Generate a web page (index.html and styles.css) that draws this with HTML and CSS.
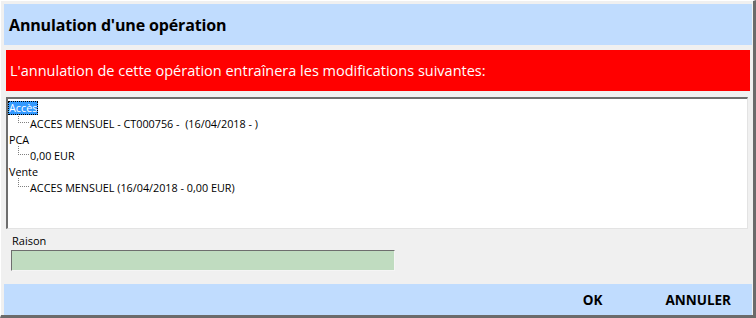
FILE: index.html
```html
<!DOCTYPE html>
<html lang="fr">
<head>
<meta charset="utf-8">
<title>Annulation d'une opération</title>
<link rel="stylesheet" href="styles.css">
</head>
<body>
<div class="window">
  <div class="header">Annulation d'une opération</div>
  <div class="warning">L'annulation de cette opération entraînera les modifications suivantes:</div>
  <div class="tree">
    <div class="node"><span class="label selected">Accès</span></div>
    <div class="leaf"><span class="branch"></span><span class="label">ACCES MENSUEL - CT000756 -&nbsp; (16/04/2018 - )</span></div>
    <div class="node"><span class="label">PCA</span></div>
    <div class="leaf"><span class="branch"></span><span class="label">0,00 EUR</span></div>
    <div class="node"><span class="label">Vente</span></div>
    <div class="leaf"><span class="branch"></span><span class="label">ACCES MENSUEL (16/04/2018 - 0,00 EUR)</span></div>
  </div>
  <div class="reason">
    <div class="reason-label">Raison</div>
    <div class="reason-input"></div>
  </div>
  <div class="footer">
    <span class="btn btn-ok">OK</span>
    <span class="btn btn-cancel">ANNULER</span>
  </div>
</div>
</body>
</html>
```
FILE: styles.css
```css
html, body {
  margin: 0;
  padding: 0;
  background: #f0f0f0;
}
body {
  font-family: "Open Sans", "Noto Sans", "DejaVu Sans", sans-serif;
}
.window {
  width: 756px;
  height: 318px;
  box-sizing: border-box;
  background: #f0f0f0;
  border-top: 1px solid #ffffff;
  border-left: 1px solid #ffffff;
  border-right: 3px solid #6b6b6b;
  border-bottom: 3px solid #6b6b6b;
  padding: 3px 1px 0 3px;
  display: flex;
  flex-direction: column;
}
.header {
  height: 41px;
  background: #c0dcfe;
  display: flex;
  align-items: center;
  padding-left: 5px;
  font-weight: bold;
  font-size: 16px;
  color: #000;
  letter-spacing: -0.15px;
}
.warning {
  margin: 5px 2px 0 2px;
  height: 41px;
  background: #ff0000;
  color: #ffffff;
  display: flex;
  align-items: center;
  padding-left: 4px;
  font-size: 14.5px;
}
.tree {
  margin: 6px 4px 0 2px;
  height: 132px;
  box-sizing: border-box;
  background: #ffffff;
  border-top: 2px solid #6e6e6e;
  border-left: 2px solid #6e6e6e;
  border-right: 1px solid #e3e3e3;
  border-bottom: 1px solid #e3e3e3;
  padding: 1px 0 0 0;
  font-size: 10.8px;
  color: #000;
}
.node, .leaf {
  height: 16px;
  display: flex;
  align-items: center;
}
.leaf {
  margin-top: -1px;
  margin-bottom: 1px;
}
.node .label {
  padding: 0 1px;
  line-height: 14px;
}
.label.selected {
  background: #3399ff;
  color: #ffffff;
  outline: 1px dotted #000;
  outline-offset: -1px;
}
.leaf .branch {
  width: 11px;
  height: 9px;
  margin-left: 10px;
  margin-top: -9px;
  border-left: 1px dotted #808080;
  border-bottom: 1px dotted #808080;
  box-sizing: border-box;
  flex: none;
}
.leaf .label {
  margin-left: 1px;
}
.reason {
  padding: 4px 0 0 7px;
}
.reason-label {
  font-size: 11px;
  color: #000;
  line-height: 15px;
  padding-left: 1px;
}
.reason-input {
  margin-top: 2px;
  width: 384px;
  height: 21px;
  box-sizing: border-box;
  background: #c0dcc0;
  border-top: 1px solid #6e6e6e;
  border-left: 1px solid #6e6e6e;
  border-right: 1px solid #f5f5f5;
  border-bottom: 1px solid #f5f5f5;
}
.footer {
  margin-top: auto;
  height: 31px;
  background: #c0dcfe;
  display: flex;
  align-items: center;
  justify-content: flex-end;
  font-weight: bold;
  font-size: 13.5px;
}
.btn {
  color: #000;
}
.btn-ok {
  margin-right: 63px;
}
.btn-cancel {
  margin-right: 21px;
}
```
